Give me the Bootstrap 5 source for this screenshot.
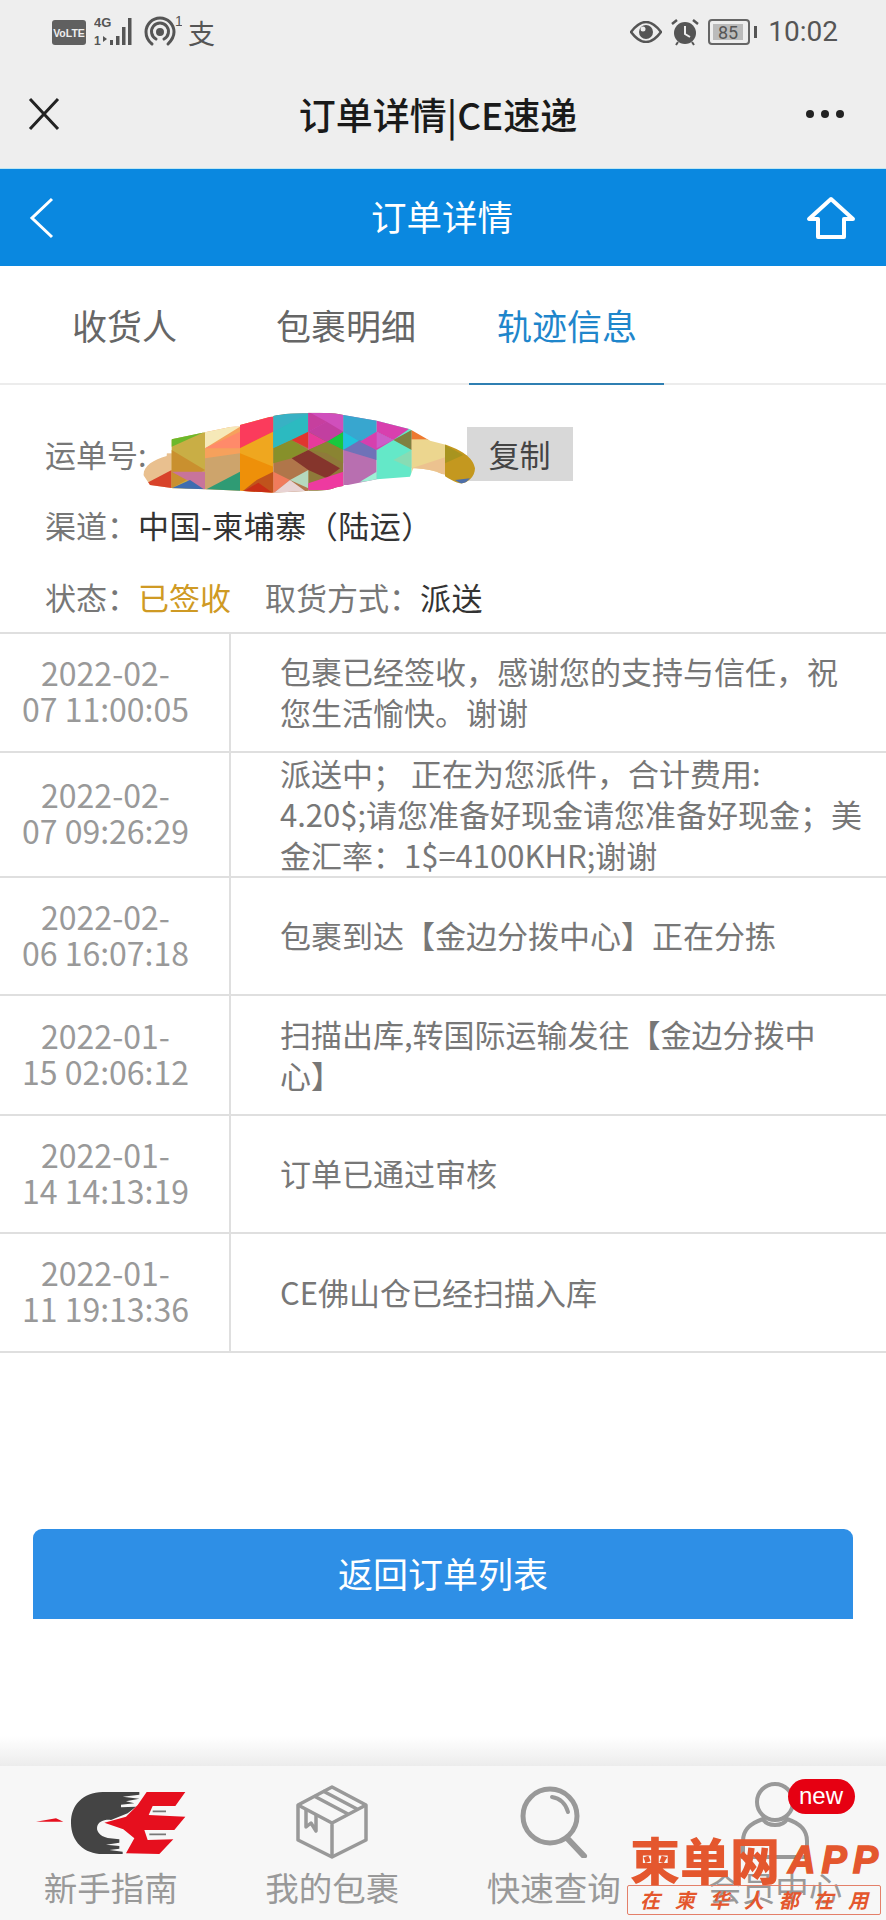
<!DOCTYPE html>
<html lang="zh-CN">
<head>
<meta charset="utf-8">
<meta name="viewport" content="width=device-width, initial-scale=1">
<link href="https://cdn.jsdelivr.net/npm/bootstrap@5.3.0/dist/css/bootstrap.min.css" rel="stylesheet">
<style>
html,body{margin:0;background:#fff}
body{font-family:"Noto Sans CJK SC","Noto Sans",sans-serif;color:#333}
.page-shell{width:886px;height:1920px;position:relative;overflow:hidden}
.wx-head{height:168px;background:#eeeeee}
.sys-bar{height:64px;padding:0 52px;color:#555}
.sys-time{font-family:Roboto,sans-serif;font-size:28px;color:#555;line-height:1;margin-left:10px}
.zhi-glyph{font-size:27px;line-height:1;color:#555;margin-left:-2px}
.wx-title-row{height:104px;padding:0 41px 4px 26px}
.wx-title{font-size:37px;font-weight:500;color:#1a1a1a;line-height:1;margin-left:9px}
.blue-bar{height:98px;background:#0a88e0;border-top:1px solid #bfe6f2;padding:0 30px 0 28px}
.blue-title{font-size:35.5px;color:#fff;line-height:1;margin-left:24px;margin-top:-3px}
.tab-strip{height:119px;border-bottom:2px solid #ececec;padding-left:72px;margin:0}
.tab-item{font-size:35px;color:#666;line-height:1;padding:41px 0 0;height:119px;position:relative;text-decoration:none}
.tab-one{width:204px}
.tab-two{width:221px}
.tab-on{color:#1f86cb}
.tab-on::after{content:"";position:absolute;left:-28px;right:-27px;bottom:0;height:2px;background:#2f7fb2}
.ship-info{padding:42px 0 13px 45px;height:247px;position:relative;font-size:31px;line-height:44px;color:#777}
.ship-line{height:44px;white-space:nowrap}
.ship-first{height:54px;align-items:center}
.ship-second{margin-top:22px}
.ship-third{margin-top:28px}
.ship-val{color:#333;letter-spacing:.5px}
.ship-gold{color:#cf9a24}
.ship-gap{margin-left:34px}
.copy-btn{width:106px;height:54px;margin-left:320px;background:#d8d8d8;border:0;border-radius:0;font-size:31px;line-height:54px;color:#444;padding:0}
.blob-mask{position:absolute;left:130px;top:15px;width:360px;height:100px}
.track-list{border-top:2px solid #dfdfdf}
.track-row{border-bottom:2px solid #dfdfdf}
.track-when{width:231px;flex:none;border-right:2px solid #dfdfdf;text-align:center;font-size:32px;line-height:36px;color:#999;padding:0 18px 5px 0;white-space:nowrap}
.track-what{flex:1;font-size:31px;line-height:41px;color:#777;padding:0 22px 3px 49px;min-width:0;text-spacing-trim:space-all}
.h-a{height:119px}.h-b{height:125px}.h-c{height:118px}.h-d{height:120px}.h-e{height:118px}.h-f{height:119px}
.return-wrap{padding:176px 33px 0}
.return-btn{height:90px;width:100%;background:#2e8fe6;border:0;color:#fff;font-size:35px;line-height:1;border-radius:9px 9px 0 0;padding:0 0 4px}
.dock-shade{position:absolute;left:0;right:0;top:1736px;height:30px;background:linear-gradient(#fff,#ececec)}
.dock{position:absolute;left:0;right:0;top:1766px;height:154px;background:#f7f7f7}
.dock-cell{width:25%;text-align:center;color:#999;font-size:33.5px;line-height:1;position:relative}
.dock-pic{height:104px;padding-top:8px}
.new-tag{position:absolute;left:123px;top:13px;width:67px;height:35px;border-radius:18px;background:#e60012;color:#fff;font-family:"Liberation Sans",sans-serif;font-size:24px;line-height:33px;text-align:center;padding:0}
.brand-stamp{position:absolute;left:630px;top:1831px;width:256px;color:#e4572e;font-weight:900}
.brand-main{font-size:50px;line-height:54px;white-space:nowrap}
.brand-app{font-family:"Liberation Sans",sans-serif;font-style:italic;font-weight:700;font-size:38px;letter-spacing:6px;margin-left:8px;line-height:50px;-webkit-text-stroke:1.5px #e4572e}
.brand-sub{height:30px;width:254px;border:1px solid #e4806a;border-radius:2px;font-size:20px;line-height:28px;font-style:italic;font-weight:700;margin-left:-3px;padding:0 12px}
</style>
</head>
<body>
<div class="page-shell d-flex flex-column">
  <header class="wx-head">
    <div class="sys-bar d-flex align-items-center justify-content-between">
      <div class="d-flex align-items-center gap-2">
        <svg width="34" height="25" viewBox="0 0 34 25"><rect width="34" height="25" rx="3" fill="#606060"/><text x="17" y="17" font-family="Liberation Sans" font-size="10.500" font-weight="700" fill="#eee" text-anchor="middle">VoLTE</text></svg>
        <svg width="42" height="34" viewBox="0 0 42 34"><text x="0" y="12" font-family="Liberation Sans" font-size="13" font-weight="700" fill="#555">4G</text><text x="0" y="30" font-family="Liberation Sans" font-size="12" font-weight="700" fill="#555">1</text><path d="M9 21l4 3-4 3z" fill="#555"/><g fill="#555"><rect x="16" y="25" width="3" height="5"/><rect x="22" y="21" width="3.500" height="9"/><rect x="28" y="12" width="3.500" height="18"/><rect x="34" y="3" width="3.500" height="27"/></g></svg>
        <svg width="38" height="36" viewBox="0 0 38 36" fill="none" stroke="#555" stroke-width="3" stroke-linecap="round"><path d="M8 30C3 26 2 21 2 18a14 14 0 0 1 28 0c0 4-2 8-6 12"/><path d="M12 25a8.500 8.500 0 1 1 8 0"/><circle cx="16" cy="18" r="2.500" fill="#555"/><text x="31" y="12" font-family="Liberation Sans" font-size="14" fill="#555" stroke="none">1</text></svg>
        <span class="zhi-glyph">支</span>
      </div>
      <div class="d-flex align-items-center" style="margin-right:-4px">
        <svg width="32" height="22" viewBox="0 0 32 22"><path d="M1 11C7 3 12 1 16 1s9 2 15 10c-6 8-11 10-15 10S7 19 1 11z" fill="none" stroke="#555" stroke-width="2.500"/><circle cx="16" cy="11" r="7" fill="#555"/><circle cx="13" cy="8" r="2.500" fill="#eee"/></svg>
        <svg class="ms-2" width="30" height="28" viewBox="0 0 30 28"><circle cx="15" cy="15" r="11" fill="#555"/><path d="M15 8v8l5 3" stroke="#eee" stroke-width="2" fill="none"/><path d="M2 6l5-4M28 6l-5-4" stroke="#555" stroke-width="2.500"/><path d="M8 24l-2 3M22 24l2 3" stroke="#555" stroke-width="2"/></svg>
        <svg class="ms-2" width="50" height="26" viewBox="0 0 50 26"><rect x="1" y="1" width="40" height="24" rx="3" fill="none" stroke="#666" stroke-width="2"/><rect x="5" y="5" width="30" height="16" fill="#bbb"/><text x="20" y="20" font-family="Roboto" font-size="18" fill="#555" text-anchor="middle">85</text><rect x="46" y="7" width="3" height="12" fill="#555"/></svg>
        <span class="sys-time">10:02</span>
      </div>
    </div>
    <div class="wx-title-row d-flex align-items-center justify-content-between">
      <svg width="36" height="36" viewBox="0 0 36 36" fill="none" stroke="#222" stroke-width="3"><path d="M4 3l28 30M32 3L4 33"/></svg>
      <span class="wx-title">订单详情|CE速递</span>
      <svg width="40" height="10" viewBox="0 0 40 10" fill="#222"><circle cx="5" cy="5" r="4"/><circle cx="20" cy="5" r="4"/><circle cx="35" cy="5" r="4"/></svg>
    </div>
  </header>
  <nav class="blue-bar d-flex align-items-center justify-content-between">
    <svg width="26" height="42" viewBox="0 0 26 42" fill="none" stroke="#fff" stroke-width="3"><path d="M24 2L4 21l20 19"/></svg>
    <span class="blue-title">订单详情</span>
    <svg width="50" height="44" viewBox="0 0 50 44" fill="none" stroke="#fff" stroke-width="4" stroke-linejoin="round"><path d="M25 3L3 23h9v18h26V23h9z"/></svg>
  </nav>
  <div class="tab-strip nav">
    <a class="tab-item tab-one" href="#">收货人</a>
    <a class="tab-item tab-two" href="#">包裹明细</a>
    <a class="tab-item tab-on" href="#">轨迹信息</a>
  </div>
  <section class="ship-info">
    <div class="ship-line ship-first d-flex"><span>运单号:</span><button class="btn copy-btn" type="button">复制</button></div>
    <div class="ship-line ship-second">渠道：<span class="ship-val">中国-柬埔寨（陆运）</span></div>
    <div class="ship-line ship-third">状态：<span class="ship-gold">已签收</span><span class="ship-gap">取货方式：</span><span class="ship-val">派送</span></div>
    <svg class="blob-mask" viewBox="0 0 1080 300">
      <defs><clipPath id="blobClip"><path d="M40 225C42 195 70 180 110 168C112 140 118 125 125 118L225 97L330 75L430 48C470 38 600 34 640 45L740 62L840 88L900 122L950 135C990 150 1030 170 1035 205C1035 232 1010 252 990 250C965 245 945 225 920 215C890 208 870 205 850 205L840 230L740 238L620 262C590 275 560 272 540 272L430 278L330 272L230 268L130 265L60 255Z"/></clipPath></defs>
      <g clip-path="url(#blobClip)">
        <rect x="30" y="160" width="100" height="110" fill="#e9c08f"/>
        <polygon points="30,260 125,210 125,270" fill="#d8432a"/>
        <rect x="125" y="90" width="100" height="180" fill="#c9ae45"/>
        <polygon points="125,95 225,95 125,140" fill="#6cb92b"/>
        <polygon points="125,150 225,210 125,265" fill="#c9902f"/>
        <polygon points="125,215 225,215 225,270" fill="#c8749b"/>
        <polygon points="125,265 180,240 225,270" fill="#3f6db0"/>
        <rect x="225" y="80" width="105" height="195" fill="#f6a15c"/>
        <polygon points="225,80 330,80 225,145" fill="#f6e9b8"/>
        <polygon points="225,145 330,95 330,145" fill="#ff8a6a"/>
        <polygon points="225,175 330,160 330,240 225,270" fill="#cda46c"/>
        <polygon points="225,270 330,215 330,275" fill="#2f9b74"/>
        <rect x="330" y="50" width="100" height="230" fill="#ee9009"/>
        <polygon points="330,50 430,50 430,95 330,145" fill="#fb3b5c"/>
        <polygon points="330,145 430,95 430,200 330,160" fill="#efa71f"/>
        <polygon points="380,240 430,215 430,280 330,280" fill="#c0531c"/>
        <polygon points="330,280 385,248 430,280" fill="#c92e16"/>
        <rect x="430" y="40" width="105" height="240" fill="#b0764a"/>
        <polygon points="430,40 535,40 535,95 430,145" fill="#38b1c4"/>
        <polygon points="430,95 535,40 535,95 430,145" fill="#2cbac0"/>
        <polygon points="430,145 485,120 535,150 485,175 430,190" fill="#87902a"/>
        <polygon points="485,120 535,95 535,145" fill="#e0352f"/>
        <polygon points="430,215 480,240 430,280" fill="#f07b5c"/>
        <polygon points="480,240 535,210 535,265" fill="#b5d9bd"/>
        <polygon points="430,280 480,240 535,280" fill="#e8d3d3"/>
        <rect x="535" y="35" width="105" height="240" fill="#8f7a3a"/>
        <polygon points="535,35 640,35 640,95 535,95" fill="#d04fbc"/>
        <polygon points="535,35 590,65 535,95" fill="#c63f9e"/>
        <polygon points="535,95 590,125 535,150" fill="#e73a9a"/>
        <polygon points="590,125 640,95 640,150" fill="#17c83e"/>
        <polygon points="535,95 590,65 640,95 590,125" fill="#c23fa0"/>
        <polygon points="535,150 590,125 640,150 640,190 590,160" fill="#8a8432"/>
        <polygon points="485,175 535,150 630,205 590,235 535,210" fill="#85352c"/>
        <polygon points="535,270 535,250 640,215 640,270" fill="#ee3aa0"/>
        <rect x="640" y="40" width="100" height="215" fill="#b86fb0"/>
        <polygon points="640,40 740,60 740,95 690,125 640,150" fill="#38a6cf"/>
        <polygon points="640,95 690,125 640,150" fill="#1fc3dc"/>
        <polygon points="640,150 690,125 740,180 690,155" fill="#6f72b8"/>
        <polygon points="640,150 740,180 740,150 690,120" fill="#6f72b8"/>
        <polygon points="690,245 740,215 740,245" fill="#9ff0d5"/>
        <rect x="740" y="60" width="105" height="190" fill="#64e8c8"/>
        <polygon points="740,60 840,85 790,120 740,95" fill="#d83fae"/>
        <polygon points="740,95 790,120 740,150 690,125" fill="#d63fae"/>
        <polygon points="740,95 790,120 740,145" fill="#cc5cc8"/>
        <polygon points="790,120 845,90 845,150" fill="#7f8140"/>
        <polygon points="790,180 845,150 845,205" fill="#87dcb4"/>
        <polygon points="845,85 900,120 845,150" fill="#ee7a30"/>
        <rect x="845" y="118" width="105" height="100" fill="#ecd68f"/>
        <polygon points="845,205 950,170 950,225" fill="#ecc28f"/>
        <rect x="945" y="130" width="95" height="125" fill="#c4981f"/>
        <polygon points="945,135 1000,165 945,190" fill="#a8941f"/>
        <polygon points="975,240 1020,235 1000,255" fill="#4e6fa8"/>
      </g>
    </svg>
  </section>
  <div class="track-list">
    <div class="track-row h-a d-flex"><div class="track-when d-flex align-items-center justify-content-center"><span>2022-02-<br>07 11:00:05</span></div><div class="track-what d-flex align-items-center"><span>包裹已经签收，感谢您的支持与信任，祝您生活愉快。谢谢</span></div></div>
    <div class="track-row h-b d-flex"><div class="track-when d-flex align-items-center justify-content-center"><span>2022-02-<br>07 09:26:29</span></div><div class="track-what d-flex align-items-center"><span>派送中； 正在为您派件，合计费用:<br>4.20$;请您准备好现金请您准备好现金；美金汇率：1$=4100KHR;谢谢</span></div></div>
    <div class="track-row h-c d-flex"><div class="track-when d-flex align-items-center justify-content-center"><span>2022-02-<br>06 16:07:18</span></div><div class="track-what d-flex align-items-center"><span>包裹到达【金边分拨中心】正在分拣</span></div></div>
    <div class="track-row h-d d-flex"><div class="track-when d-flex align-items-center justify-content-center"><span>2022-01-<br>15 02:06:12</span></div><div class="track-what d-flex align-items-center"><span>扫描出库,转国际运输发往【金边分拨中心】</span></div></div>
    <div class="track-row h-e d-flex"><div class="track-when d-flex align-items-center justify-content-center"><span>2022-01-<br>14 14:13:19</span></div><div class="track-what d-flex align-items-center"><span>订单已通过审核</span></div></div>
    <div class="track-row h-f d-flex"><div class="track-when d-flex align-items-center justify-content-center"><span>2022-01-<br>11 19:13:36</span></div><div class="track-what d-flex align-items-center"><span>CE佛山仓已经扫描入库</span></div></div>
  </div>
  <div class="return-wrap"><button class="btn return-btn" type="button">返回订单列表</button></div>
  <div class="dock-shade"></div>
  <footer class="dock d-flex">
    <div class="dock-cell">
      <div class="dock-pic d-flex align-items-center justify-content-center">
        <svg width="150" height="65" viewBox="100 60 450 195"><path d="M410 66L300 66C240 68 205 105 205 158C205 215 245 252 300 252L360 252V245L320 240L350 236V228L310 224L350 218V208L315 204C290 198 278 182 285 165C292 152 310 148 325 150L375 130L400 110L355 112V104L395 100L370 94L410 86L360 80L410 74Z" fill="#444"/><path d="M432 66L548 66L518 108L450 108L438 135L548 140L515 180L425 180L435 210L512 208L470 252L370 250L395 205L362 178L305 158L370 140L405 105Z" fill="#e60f1e"/><path d="M450 124h40M440 193h50" stroke="#777" stroke-width="5" fill="none"/><path d="M100 155L160 145L182 155Z" fill="#e60f1e"/></svg>
      </div>
      新手指南
    </div>
    <div class="dock-cell">
      <div class="dock-pic d-flex align-items-center justify-content-center">
        <svg width="72" height="74" viewBox="0 0 72 74" fill="none" stroke="#999" stroke-width="3.500" stroke-linejoin="round"><path d="M36 2L70 20V55L36 72L2 55V20Z"/><path d="M2 20L36 38L70 20M36 38V72"/><path d="M18 11L52 29M27 6L61 24"/><path d="M10 24V42L15 38L20 46V29"/></svg>
      </div>
      我的包裹
    </div>
    <div class="dock-cell">
      <div class="dock-pic d-flex align-items-center justify-content-center">
        <svg width="72" height="72" viewBox="0 0 72 72" fill="none" stroke="#999" stroke-linecap="round"><circle cx="32" cy="30" r="27" stroke-width="5"/><path d="M49 52L66 70" stroke-width="6"/><path d="M34 11C42 12 48 18 50 26" stroke-width="4"/></svg>
      </div>
      快速查询
    </div>
    <div class="dock-cell">
      <div class="dock-pic d-flex align-items-center justify-content-center">
        <svg width="72" height="82" viewBox="0 0 72 82" fill="none" stroke="#999" stroke-width="4"><circle cx="36" cy="21" r="18"/><path d="M24 38C12 42 4 48 4 60V76H68V60C68 48 60 42 48 38C44 46 28 46 24 38Z"/></svg>
      </div>
      会员中心
      <span class="new-tag">new</span>
    </div>
  </footer>
  <div class="brand-stamp">
    <div class="brand-main d-flex align-items-end"><span>柬单网</span><span class="brand-app">APP</span></div>
    <div class="brand-sub d-flex justify-content-between"><span>在</span><span>柬</span><span>华</span><span>人</span><span>都</span><span>在</span><span>用</span></div>
  </div>
</div>
<script src="https://cdn.jsdelivr.net/npm/bootstrap@5.3.0/dist/js/bootstrap.bundle.min.js"></script>
</body>
</html>
